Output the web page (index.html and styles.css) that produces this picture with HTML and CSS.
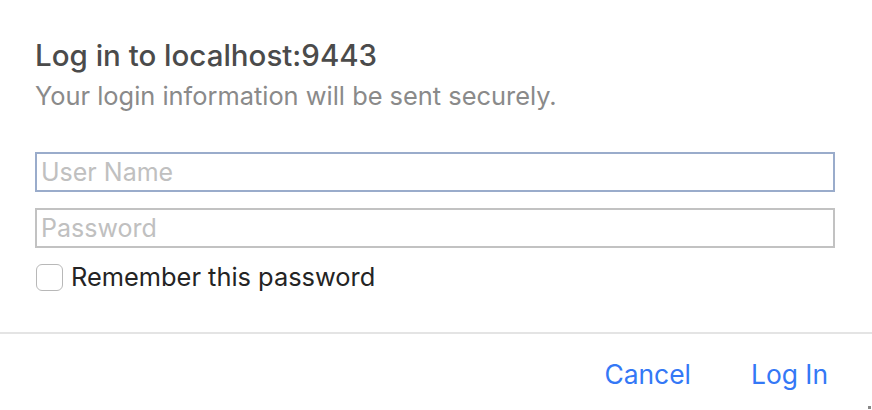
FILE: index.html
```html
<!DOCTYPE html>
<html lang="en">
<head>
<meta charset="utf-8">
<title>Log in</title>
<link rel="stylesheet" href="styles.css">
</head>
<body>
<div class="dialog">
  <div class="content">
    <h1 class="title">Log in to localhost:9443</h1>
    <p class="subtitle">Your login information will be sent securely.</p>
    <div class="fields">
      <input class="field field-focused" type="text" placeholder="User Name">
      <input class="field" type="password" placeholder="Password">
    </div>
    <label class="remember">
      <span class="checkbox"></span>
      <span class="remember-text">Remember this password</span>
    </label>
  </div>
  <div class="footer">
    <button class="btn" type="button">Cancel</button>
    <button class="btn" type="button">Log In</button>
  </div>
  <span class="grip"></span>
</div>
</body>
</html>
```
FILE: styles.css
```css
html, body {
  margin: 0;
  padding: 0;
  background: #ffffff;
}
body {
  font-family: Inter, "Noto Sans", sans-serif;
  width: 872px;
  height: 410px;
  overflow: hidden;
}
.dialog {
  position: relative;
  width: 872px;
  height: 410px;
  display: flex;
  flex-direction: column;
}
.content {
  padding: 37px 38px 0 35px;
  display: flex;
  flex-direction: column;
}
.title {
  margin: 0;
  font-size: 29.5px;
  font-weight: 500;
  color: #4b4b4b;
  line-height: 37px;
}
.subtitle {
  margin: 7px 0 0;
  font-size: 25.4px;
  font-weight: 400;
  color: #8a8a8a;
  line-height: 30px;
}
.fields {
  margin-top: 41px;
  display: flex;
  flex-direction: column;
  gap: 16px;
}
.field {
  box-sizing: border-box;
  width: 800px;
  height: 40px;
  margin: 0;
  border: 2px solid #c2c2c2;
  padding: 0 4px;
  font-family: inherit;
  font-size: 25px;
  color: #333;
  background: #fff;
  outline: none;
}
.field::placeholder {
  color: #c0c0c0;
}
.field-focused {
  border-color: #9aaccb;
}
.remember {
  margin-top: 14px;
  height: 30px;
  display: flex;
  align-items: center;
  gap: 8px;
}
.checkbox {
  box-sizing: border-box;
  width: 27px;
  height: 27px;
  margin-left: 1px;
  border: 1px solid #b8b8b8;
  border-radius: 6px;
  background: #fff;
}
.remember-text {
  font-size: 25.4px;
  line-height: 30px;
  color: #242424;
}
.footer {
  border-top: 2px solid #e4e4e4;
  flex: 1;
  display: flex;
  justify-content: flex-end;
  align-items: flex-start;
  padding: 24px 44px 0 0;
  gap: 60px;
  margin-top: 40px;
}
.btn {
  border: none;
  background: none;
  padding: 0;
  font-family: inherit;
  font-size: 26.4px;
  color: #3478f6;
  cursor: pointer;
  line-height: 33px;
}
.grip {
  position: absolute;
  right: 1px;
  bottom: 1px;
  width: 3px;
  height: 3px;
  background: #888;
}
```
